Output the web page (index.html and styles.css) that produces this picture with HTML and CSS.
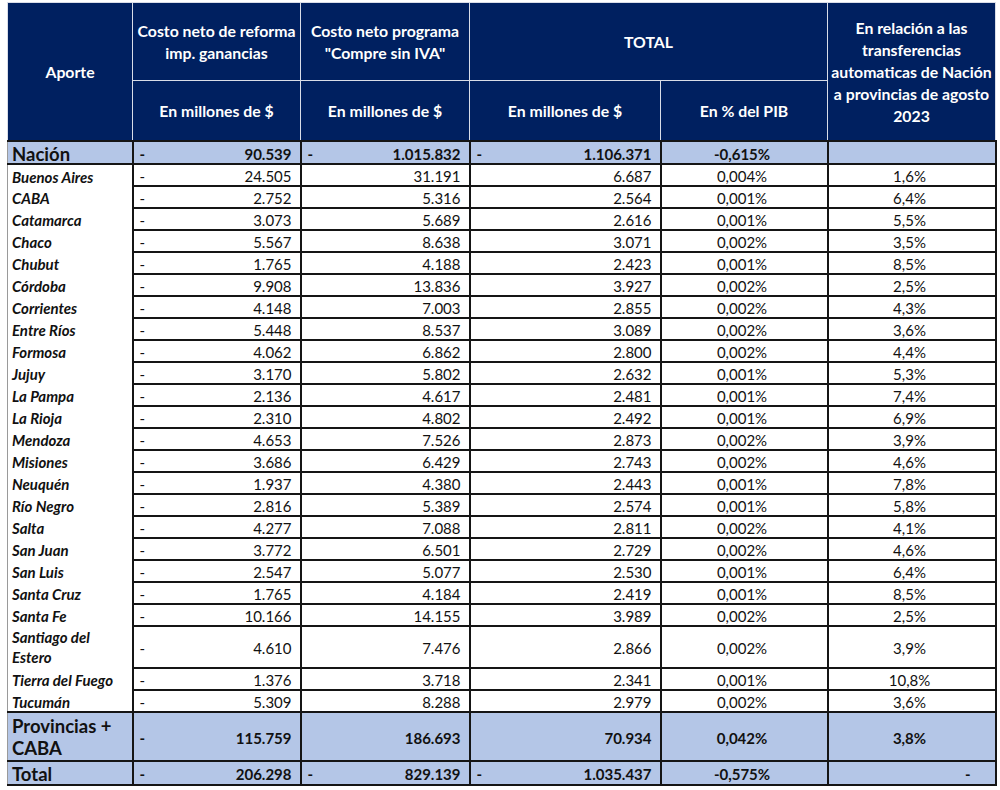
FILE: index.html
```html
<!DOCTYPE html>
<html lang="es">
<head>
<meta charset="utf-8">
<title>Costo neto por jurisdicción</title>
<link rel="stylesheet" href="styles.css">
</head>
<body>
<table class="tbl">
  <colgroup>
    <col class="c1"><col class="c2"><col class="c3"><col class="c4"><col class="c5"><col class="c6">
  </colgroup>
  <thead>
    <tr class="h1">
      <th rowspan="2" class="h-aporte">Aporte</th>
      <th>Costo neto de reforma<br>imp. ganancias</th>
      <th>Costo neto programa<br>"Compre sin IVA"</th>
      <th colspan="2">TOTAL</th>
      <th rowspan="2" class="h-rel">En relación a las<br>transferencias<br>automaticas de Nación<br>a provincias de agosto<br>2023</th>
    </tr>
    <tr class="h2">
      <th>En millones de $</th>
      <th>En millones de $</th>
      <th>En millones de $</th>
      <th>En % del PIB</th>
    </tr>
  </thead>
  <tbody>
    <tr class="sum sum-nacion">
      <td class="name">Nación</td>
      <td class="num"><span class="dash">-</span>90.539</td>
      <td class="num"><span class="dash">-</span>1.015.832</td>
      <td class="num"><span class="dash">-</span>1.106.371</td>
      <td class="ctr">-0,615%</td>
      <td class="ctr"></td>
    </tr>
    <tr class="row"><td class="name">Buenos Aires</td><td class="num"><span class="dash">-</span>24.505</td><td class="num">31.191</td><td class="num">6.687</td><td class="ctr">0,004%</td><td class="ctr">1,6%</td></tr>
    <tr class="row"><td class="name">CABA</td><td class="num"><span class="dash">-</span>2.752</td><td class="num">5.316</td><td class="num">2.564</td><td class="ctr">0,001%</td><td class="ctr">6,4%</td></tr>
    <tr class="row"><td class="name">Catamarca</td><td class="num"><span class="dash">-</span>3.073</td><td class="num">5.689</td><td class="num">2.616</td><td class="ctr">0,001%</td><td class="ctr">5,5%</td></tr>
    <tr class="row"><td class="name">Chaco</td><td class="num"><span class="dash">-</span>5.567</td><td class="num">8.638</td><td class="num">3.071</td><td class="ctr">0,002%</td><td class="ctr">3,5%</td></tr>
    <tr class="row"><td class="name">Chubut</td><td class="num"><span class="dash">-</span>1.765</td><td class="num">4.188</td><td class="num">2.423</td><td class="ctr">0,001%</td><td class="ctr">8,5%</td></tr>
    <tr class="row"><td class="name">Córdoba</td><td class="num"><span class="dash">-</span>9.908</td><td class="num">13.836</td><td class="num">3.927</td><td class="ctr">0,002%</td><td class="ctr">2,5%</td></tr>
    <tr class="row"><td class="name">Corrientes</td><td class="num"><span class="dash">-</span>4.148</td><td class="num">7.003</td><td class="num">2.855</td><td class="ctr">0,002%</td><td class="ctr">4,3%</td></tr>
    <tr class="row"><td class="name">Entre Ríos</td><td class="num"><span class="dash">-</span>5.448</td><td class="num">8.537</td><td class="num">3.089</td><td class="ctr">0,002%</td><td class="ctr">3,6%</td></tr>
    <tr class="row"><td class="name">Formosa</td><td class="num"><span class="dash">-</span>4.062</td><td class="num">6.862</td><td class="num">2.800</td><td class="ctr">0,002%</td><td class="ctr">4,4%</td></tr>
    <tr class="row"><td class="name">Jujuy</td><td class="num"><span class="dash">-</span>3.170</td><td class="num">5.802</td><td class="num">2.632</td><td class="ctr">0,001%</td><td class="ctr">5,3%</td></tr>
    <tr class="row"><td class="name">La Pampa</td><td class="num"><span class="dash">-</span>2.136</td><td class="num">4.617</td><td class="num">2.481</td><td class="ctr">0,001%</td><td class="ctr">7,4%</td></tr>
    <tr class="row"><td class="name">La Rioja</td><td class="num"><span class="dash">-</span>2.310</td><td class="num">4.802</td><td class="num">2.492</td><td class="ctr">0,001%</td><td class="ctr">6,9%</td></tr>
    <tr class="row"><td class="name">Mendoza</td><td class="num"><span class="dash">-</span>4.653</td><td class="num">7.526</td><td class="num">2.873</td><td class="ctr">0,002%</td><td class="ctr">3,9%</td></tr>
    <tr class="row"><td class="name">Misiones</td><td class="num"><span class="dash">-</span>3.686</td><td class="num">6.429</td><td class="num">2.743</td><td class="ctr">0,002%</td><td class="ctr">4,6%</td></tr>
    <tr class="row"><td class="name">Neuquén</td><td class="num"><span class="dash">-</span>1.937</td><td class="num">4.380</td><td class="num">2.443</td><td class="ctr">0,001%</td><td class="ctr">7,8%</td></tr>
    <tr class="row"><td class="name">Río Negro</td><td class="num"><span class="dash">-</span>2.816</td><td class="num">5.389</td><td class="num">2.574</td><td class="ctr">0,001%</td><td class="ctr">5,8%</td></tr>
    <tr class="row"><td class="name">Salta</td><td class="num"><span class="dash">-</span>4.277</td><td class="num">7.088</td><td class="num">2.811</td><td class="ctr">0,002%</td><td class="ctr">4,1%</td></tr>
    <tr class="row"><td class="name">San Juan</td><td class="num"><span class="dash">-</span>3.772</td><td class="num">6.501</td><td class="num">2.729</td><td class="ctr">0,002%</td><td class="ctr">4,6%</td></tr>
    <tr class="row"><td class="name">San Luis</td><td class="num"><span class="dash">-</span>2.547</td><td class="num">5.077</td><td class="num">2.530</td><td class="ctr">0,001%</td><td class="ctr">6,4%</td></tr>
    <tr class="row"><td class="name">Santa Cruz</td><td class="num"><span class="dash">-</span>1.765</td><td class="num">4.184</td><td class="num">2.419</td><td class="ctr">0,001%</td><td class="ctr">8,5%</td></tr>
    <tr class="row"><td class="name">Santa Fe</td><td class="num"><span class="dash">-</span>10.166</td><td class="num">14.155</td><td class="num">3.989</td><td class="ctr">0,002%</td><td class="ctr">2,5%</td></tr>
    <tr class="row row-tall"><td class="name">Santiago del<br>Estero</td><td class="num"><span class="dash">-</span>4.610</td><td class="num">7.476</td><td class="num">2.866</td><td class="ctr">0,002%</td><td class="ctr">3,9%</td></tr>
    <tr class="row"><td class="name">Tierra del Fuego</td><td class="num"><span class="dash">-</span>1.376</td><td class="num">3.718</td><td class="num">2.341</td><td class="ctr">0,001%</td><td class="ctr">10,8%</td></tr>
    <tr class="row"><td class="name">Tucumán</td><td class="num"><span class="dash">-</span>5.309</td><td class="num">8.288</td><td class="num">2.979</td><td class="ctr">0,002%</td><td class="ctr">3,6%</td></tr>
    <tr class="sum sum-prov">
      <td class="name">Provincias +<br>CABA</td>
      <td class="num"><span class="dash">-</span>115.759</td>
      <td class="num">186.693</td>
      <td class="num">70.934</td>
      <td class="ctr">0,042%</td>
      <td class="ctr">3,8%</td>
    </tr>
    <tr class="sum sum-total">
      <td class="name">Total</td>
      <td class="num"><span class="dash">-</span>206.298</td>
      <td class="num"><span class="dash">-</span>829.139</td>
      <td class="num"><span class="dash">-</span>1.035.437</td>
      <td class="ctr">-0,575%</td>
      <td class="num num-dash">-</td>
    </tr>
  </tbody>
</table>
</body>
</html>
```

FILE: styles.css
```css
html, body {
  margin: 0;
  padding: 0;
  background: #ffffff;
}

body {
  padding: 2px 0 0 7px;
  font-family: Lato, "Liberation Sans", sans-serif;
  color: #111111;
}

.tbl {
  border-collapse: collapse;
  table-layout: fixed;
  width: 988px;
}

.c1 { width: 125px; }
.c2 { width: 168px; }
.c3 { width: 169px; }
.c4 { width: 191px; }
.c5 { width: 167px; }
.c6 { width: 168px; }

/* header */
.tbl th {
  background: #002060;
  color: #ffffff;
  font-weight: 700;
  font-size: 15.8px;
  line-height: 22px;
  text-align: center;
  vertical-align: middle;
  border: 1px solid #d9dde8;
  padding: 0 1px;
  white-space: nowrap;
}

.h1 th { height: 77px; }
.h2 th { height: 59px; }

/* body */
.tbl td {
  border: 2px solid #151515;
  height: 18px;
  padding: 2px 8px 0 4px;
  font-size: 15px;
  line-height: 18px;
  vertical-align: middle;
  white-space: nowrap;
}

.tbl td.name {
  border-left: 1px solid #9a9a9a;
  font-weight: 700;
  font-style: italic;
  font-size: 15px;
  padding-left: 4px;
}

.row td.name {
  border-top: 0;
  border-bottom: 0;
}

.num { text-align: right; }
.ctr { text-align: center; }

.dash {
  float: left;
  padding-left: 2px;
}

.num-dash { padding-right: 24px !important; }

.row-tall td { height: 38px; }
.row-tall td.name {
  height: 40px;
  line-height: 20px;
  padding-top: 0;
}

.sum td {
  background: #b4c6e7;
  font-weight: 700;
}

.sum td.name {
  font-style: normal;
  font-size: 18.5px;
}

.sum-nacion td { height: 19px; }
.sum-prov td { height: 45px; }
.sum-prov td.name {
  height: 47px;
  line-height: 22px;
  padding-top: 0;
}
.sum-total td { height: 20px; }
```
